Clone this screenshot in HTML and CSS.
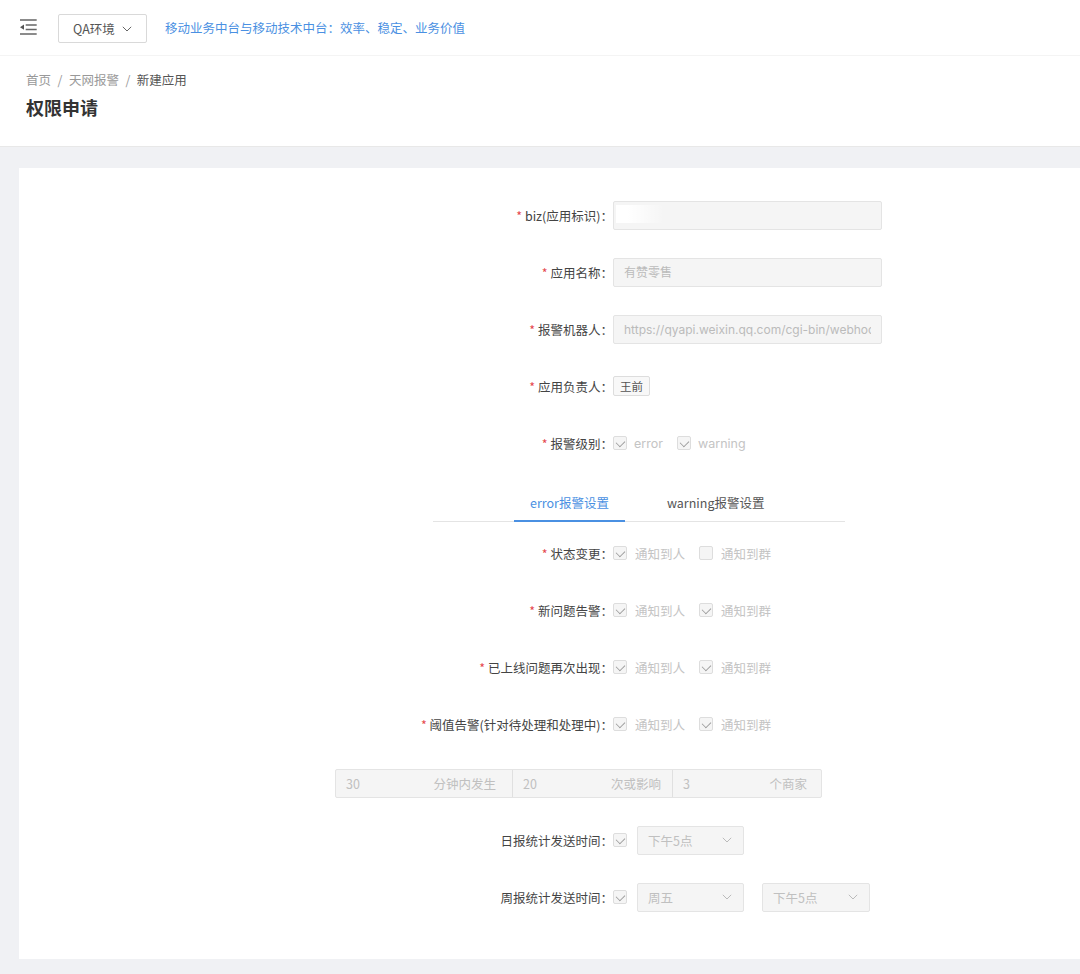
FILE: index.html
```html
<!DOCTYPE html>
<html lang="zh-CN">
    <head>
        <meta charset="utf-8">
        <title>权限申请</title>
        <link rel="stylesheet" href="styles.css">
    </head>
    <body>
        <div class="topbar">
            <svg class="menu-icon" width="18" height="18" viewBox="0 0 18 18">
                <path d="M1 3h16.7M6.7 8h11M6.7 12.5h11M1 17h16.7" stroke="#666" stroke-width="1.4" fill="none"/>
                <path d="M1 10.2l4-2.6v5.2z" fill="#555"/>
            </svg>
            <div class="env-select">QA环境
                <svg class="chevron" width="10" height="6" viewBox="0 0 10 6"><path d="M.8.8L5 5l4.2-4.2" stroke="#666" fill="none"/></svg>
            </div>
            <a class="notice">移动业务中台与移动技术中台：效率、稳定、业务价值</a>
        </div>

        <div class="page-header">
            <div class="breadcrumb">
                <span>首页</span><i>/</i><span>天网报警</span><i>/</i><span class="current">新建应用</span>
            </div>
            <h1>权限申请</h1>
        </div>

        <div class="content">
            <div class="card">
                <div class="row">
                    <label class="req">biz(应用标识)：</label>
                    <div class="input"><span class="smudge"></span></div>
                </div>
                <div class="row">
                    <label class="req">应用名称：</label>
                    <div class="input"><span class="input-text">有赞零售</span></div>
                </div>
                <div class="row">
                    <label class="req">报警机器人：</label>
                    <div class="input"><span class="input-text">https://qyapi.weixin.qq.com/cgi-bin/webhook/send</span></div>
                </div>
                <div class="row">
                    <label class="req">应用负责人：</label>
                    <span class="tag">王前</span>
                </div>
                <div class="row">
                    <label class="req">报警级别：</label>
                    <span class="check on"></span><span class="check-text wide">error</span>
                    <span class="check on"></span><span class="check-text wide">warning</span>
                </div>

                <div class="tabs">
                    <div class="tab active">error报警设置</div>
                    <div class="tab">warning报警设置</div>
                </div>

                <div class="row">
                    <label class="req">状态变更：</label>
                    <span class="check on"></span><span class="check-text">通知到人</span>
                    <span class="check"></span><span class="check-text">通知到群</span>
                </div>
                <div class="row">
                    <label class="req">新问题告警：</label>
                    <span class="check on"></span><span class="check-text">通知到人</span>
                    <span class="check on"></span><span class="check-text">通知到群</span>
                </div>
                <div class="row">
                    <label class="req">已上线问题再次出现：</label>
                    <span class="check on"></span><span class="check-text">通知到人</span>
                    <span class="check on"></span><span class="check-text">通知到群</span>
                </div>
                <div class="row">
                    <label class="req">阈值告警(针对待处理和处理中)：</label>
                    <span class="check on"></span><span class="check-text">通知到人</span>
                    <span class="check on"></span><span class="check-text">通知到群</span>
                </div>

                <div class="threshold">
                    <div class="seg seg-a"><span>30</span><span>分钟内发生</span></div>
                    <div class="seg seg-b"><span>20</span><span>次或影响</span></div>
                    <div class="seg seg-c"><span>3</span><span>个商家</span></div>
                </div>

                <div class="row">
                    <label>日报统计发送时间：</label>
                    <span class="check on"></span>
                    <div class="select">下午5点<svg class="chevron" width="10" height="6" viewBox="0 0 10 6"><path d="M.8.8L5 5l4.2-4.2" stroke="#bbb" fill="none"/></svg></div>
                </div>
                <div class="row">
                    <label>周报统计发送时间：</label>
                    <span class="check on"></span>
                    <div class="select">周五<svg class="chevron" width="10" height="6" viewBox="0 0 10 6"><path d="M.8.8L5 5l4.2-4.2" stroke="#bbb" fill="none"/></svg></div>
                    <div class="select">下午5点<svg class="chevron" width="10" height="6" viewBox="0 0 10 6"><path d="M.8.8L5 5l4.2-4.2" stroke="#bbb" fill="none"/></svg></div>
                </div>
            </div>
        </div>
    </body>
</html>
```

FILE: styles.css
```css
* {
    box-sizing: border-box;
}

html, body {
    margin: 0;
    height: 974px;
    overflow: hidden;
}

body {
    font-family: "Noto Sans CJK SC", Inter, sans-serif;
    font-size: 12.5px;
    color: #333;
    background: #f0f1f4;
}

.topbar {
    height: 56px;
    padding: 0 0 0 19px;
    display: flex;
    align-items: center;
    background: #fff;
    border-bottom: 1px solid #f4f4f4;
}

.menu-icon {
    margin-top: -4px;
}

.env-select {
    width: 89px;
    height: 29px;
    margin: 2px 18px 0 21px;
    padding-left: 14px;
    display: flex;
    align-items: center;
    border: 1px solid #d9d9d9;
    border-radius: 2px;
    color: #555;
}

.env-select .chevron {
    margin-left: 7px;
}

.notice {
    color: #4a90e2;
}

.page-header {
    height: 91px;
    padding: 15px 26px 0;
    background: #fff;
    border-bottom: 1px solid #e8e8e8;
}

.breadcrumb {
    height: 18px;
    line-height: 18px;
    color: #999;
}

.breadcrumb i {
    margin: 0 6.5px;
    font-style: normal;
}

.breadcrumb .current {
    color: #555;
}

h1 {
    margin: 6px 0 0;
    font-size: 18px;
    line-height: 24px;
    font-weight: 700;
    color: #333;
}

.content {
    padding: 21px 0 0 19px;
}

.card {
    height: 791px;
    padding-top: 32px;
    background: #fff;
}

.row {
    height: 30px;
    margin-bottom: 27px;
    display: flex;
    align-items: center;
}

.row label {
    width: 594px;
    flex: none;
    text-align: right;
    white-space: nowrap;
    color: #444;
}

.req::before {
    content: "* ";
    color: #e5484d;
}

.input {
    position: relative;
    width: 269px;
    height: 29px;
    padding: 0 10px;
    line-height: 27px;
    background: #f5f5f5;
    border: 1px solid #e4e4e4;
    border-radius: 2px;
    color: #bbb;
}

.input-text {
    display: block;
    overflow: hidden;
    white-space: nowrap;
    font-family: Inter, "Noto Sans CJK SC", sans-serif;
    font-size: 12px;
}

.smudge {
    position: absolute;
    left: 2px;
    top: 3px;
    width: 48px;
    height: 18px;
    background: linear-gradient(90deg, #fff 25%, rgba(255, 255, 255, 0));
}

.tag {
    height: 20px;
    padding: 0 6px;
    line-height: 18px;
    font-size: 11.5px;
    color: #555;
    background: #f8f8f8;
    border: 1px solid #ddd;
    border-radius: 2px;
}

.check {
    position: relative;
    width: 14px;
    height: 14px;
    flex: none;
    background: #f5f5f5;
    border: 1px solid #ddd;
    border-radius: 2px;
}

.check.on::after {
    content: "";
    position: absolute;
    left: 3px;
    top: 1px;
    width: 6px;
    height: 8px;
    border-right: 1.4px solid #999;
    border-bottom: 1.4px solid #999;
    transform: rotate(45deg) scale(.85);
}

.check-text {
    width: 72px;
    padding-left: 8px;
    color: #c4c4c4;
}

.check-text.wide {
    width: 50px;
    padding-left: 7px;
    font-family: Inter, sans-serif;
}

.tabs {
    width: 412px;
    height: 44px;
    margin: -7px 0 16px 414px;
    padding-left: 81px;
    display: flex;
    border-bottom: 1px solid #e4e4e4;
}

.tab {
    height: 44px;
    padding: 0 16px;
    margin-right: 26px;
    line-height: 50px;
    color: #555;
}

.tab.active {
    color: #4a90e2;
    border-bottom: 2px solid #4a90e2;
}

.threshold {
    width: 487px;
    height: 29px;
    margin: 30px 0 27px 316px;
    display: flex;
    background: #f5f5f5;
    border: 1px solid #e4e4e4;
    border-radius: 2px;
    color: #c0c0c0;
}

.seg {
    display: flex;
    justify-content: space-between;
    align-items: center;
    padding: 0 16px 0 10px;
}

.seg-a {
    width: 177px;
    border-right: 1px solid #e0e0e0;
}

.seg-b {
    width: 160px;
    padding-right: 11px;
    border-right: 1px solid #e0e0e0;
}

.seg-c {
    flex: 1;
    padding-right: 14px;
}

.select {
    width: 107px;
    height: 29px;
    margin: 0 18px 0 10px;
    padding: 0 11px 0 10px;
    display: flex;
    justify-content: space-between;
    align-items: center;
    background: #f5f5f5;
    border: 1px solid #e4e4e4;
    border-radius: 2px;
    color: #c0c0c0;
}

.select + .select {
    margin-left: 0;
    width: 108px;
}
```
